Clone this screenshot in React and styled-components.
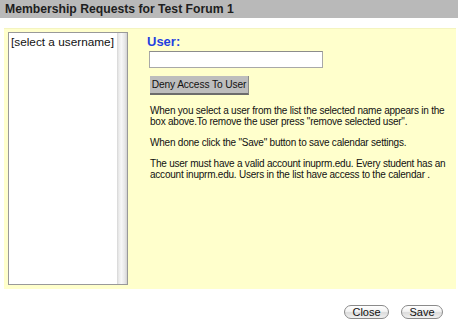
import React from "react";
import styled, { createGlobalStyle } from "styled-components";

const Global = createGlobalStyle`
  html, body { margin: 0; padding: 0; background: #fff; }
  body { font-family: "Liberation Sans", Arial, sans-serif; width: 458px; height: 325px; overflow: hidden; }
`;

const Page = styled.div`
  display: flex;
  flex-direction: column;
  width: 458px;
  height: 325px;
`;

const TitleBar = styled.div`
  height: 18px;
  background: #b9b9b9;
  padding-left: 5px;
  font: bold 12.2px/18px "Liberation Sans", Arial, sans-serif;
  color: #1e1e1e;
`;

const Panel = styled.div`
  margin: 10px 2px 0 4px;
  height: 261px;
  box-sizing: border-box;
  background: #ffffcc;
  border-top: 1px solid #f4f4c0;
  padding: 3px 4px 4px 4px;
  display: flex;
`;

const ListBox = styled.div`
  width: 120px;
  height: 253px;
  box-sizing: border-box;
  border: 1px solid #999;
  background: #fff;
  display: flex;
  flex-shrink: 0;
`;

const ListItems = styled.div`
  flex: 1;
  padding: 2px 0 0 2px;
  font: 11.8px/14px "Liberation Sans", Arial, sans-serif;
  color: #111;
  white-space: nowrap;
  overflow: hidden;
`;

const ScrollTrack = styled.div`
  width: 10px;
  background: linear-gradient(to right, #d6d6d6 0, #ececec 2px, #f7f7f7 45%, #e6e6e6 80%, #d2d2d2 100%);
`;

const Form = styled.div`
  flex: 1;
  display: flex;
  flex-direction: column;
  align-items: flex-start;
  padding-left: 19px;
  padding-top: 2px;
`;

const Label = styled.div`
  font: bold 13px/16px "Liberation Sans", Arial, sans-serif;
  color: #1f3fe0;
`;

const TextInput = styled.input`
  margin: 1px 0 0 2px;
  width: 174px;
  height: 17px;
  box-sizing: border-box;
  border: 1px solid #a8a8a8;
  border-top-color: #8c8c8c;
  background: #fff;
  padding: 0 2px;
  outline: none;
`;

const DenyButton = styled.button`
  margin: 8px 0 0 3px;
  width: 99px;
  height: 19px;
  box-sizing: border-box;
  background: #bdbdbd;
  border: none;
  border-bottom: 2px solid #6c6c6c;
  border-right: 1px solid #8a8a8a;
  padding: 0;
  font: 10.2px/17px "Liberation Sans", Arial, sans-serif;
  letter-spacing: -0.1px;
  white-space: nowrap;
  color: #111;
  text-align: center;
`;

const Help = styled.div`
  margin: 10px 0 0 3px;
  display: flex;
  flex-direction: column;
  gap: 10px;
`;

const Para = styled.p`
  margin: 0;
  font: 10px/11px "Liberation Sans", Arial, sans-serif;
  letter-spacing: -0.22px;
  color: #111;
  width: 302px;
`;

const Footer = styled.div`
  display: flex;
  justify-content: flex-end;
  gap: 12px;
  padding: 16px 15px 0 0;
`;

const PillButton = styled.button`
  width: ${(p) => p.$w}px;
  height: 14px;
  box-sizing: border-box;
  border: 1px solid #8a8a8a;
  border-radius: 7px;
  background: linear-gradient(to bottom, #ffffff 0%, #f2f2f2 45%, #dcdcdc 55%, #f0f0f0 100%);
  padding: 0;
  font: 11px/12px "Liberation Sans", Arial, sans-serif;
  color: #111;
`;

export default function App() {
  return (
    <Page>
      <Global />
      <TitleBar>Membership Requests for Test Forum 1</TitleBar>
      <Panel>
        <ListBox>
          <ListItems>[select a username]</ListItems>
          <ScrollTrack />
        </ListBox>
        <Form>
          <Label>User:</Label>
          <TextInput type="text" />
          <DenyButton>Deny Access To User</DenyButton>
          <Help>
            <Para>
              When you select a user from the list the selected name appears in the box above.To remove the user press "remove selected user".
            </Para>
            <Para>When done click the "Save" button to save calendar settings.</Para>
            <Para>
              The user must have a valid account inuprm.edu. Every student has an account inuprm.edu. Users in the list have access to the calendar .
            </Para>
          </Help>
        </Form>
      </Panel>
      <Footer>
        <PillButton $w={45}>Close</PillButton>
        <PillButton $w={42}>Save</PillButton>
      </Footer>
    </Page>
  );
}
